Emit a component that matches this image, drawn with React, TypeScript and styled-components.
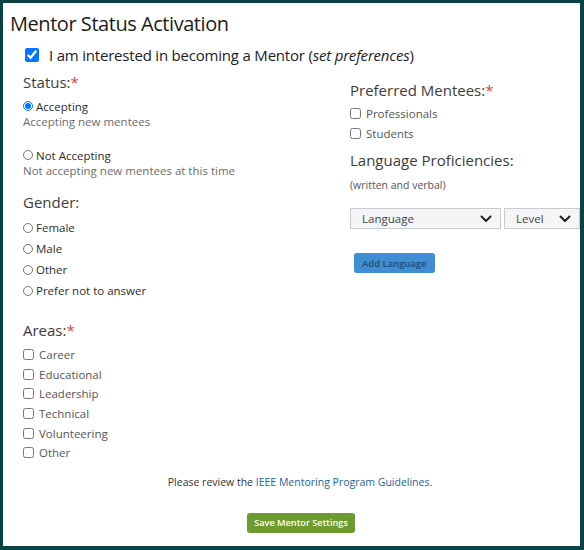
import React from 'react';
import styled, { createGlobalStyle } from 'styled-components';

const GlobalStyle = createGlobalStyle`
    html, body {
        margin: 0;
        padding: 0;
        background: #ffffff;
    }

    body {
        font-family: "Open Sans", "Noto Sans", sans-serif;
    }
`;

const Frame = styled.div`
    width: 584px;
    height: 550px;
    box-sizing: border-box;
    border-style: solid;
    border-color: #0a4346;
    border-width: 3px 4px 4px 3px;
    background: #ffffff;
    overflow: hidden;
    padding: 9px 0 0 7px;
`;

const Title = styled.h1`
    margin: 0;
    font-size: 20px;
    font-weight: 400;
    line-height: 24px;
    letter-spacing: -0.45px;
    color: #1b1b1b;
`;

const InterestRow = styled.label`
    display: flex;
    align-items: center;
    gap: 10px;
    margin: 7px 0 0 15px;
    height: 24px;
    font-size: 15px;
    letter-spacing: -0.2px;
    color: #1c1c2a;

    input {
        width: 14px;
        height: 14px;
        margin: 0;
    }
`;

const Columns = styled.div`
    display: grid;
    grid-template-columns: 327px 1fr;
    padding-left: 13px;
    margin-top: 5px;
`;

const Column = styled.div<{ $offset?: number }>`
    display: flex;
    flex-direction: column;
    padding-top: ${p => p.$offset ?? 0}px;
`;

const SectionLabel = styled.div<{ $gap?: number }>`
    font-size: 15px;
    line-height: 20px;
    color: #3d3d3d;
    margin-top: ${p => p.$gap ?? 0}px;
`;

const Required = styled.span`
    color: #e0443e;
`;

const RadioRow = styled.label<{ $gap?: number; $height?: number }>`
    display: flex;
    align-items: center;
    gap: 3px;
    height: ${p => p.$height ?? 16}px;
    margin-top: ${p => p.$gap ?? 0}px;
    font-size: 11.5px;
    color: #2d2d2d;

    input {
        width: 10px;
        height: 10px;
        margin: 0;
    }
`;

const Hint = styled.div`
    font-size: 11.5px;
    line-height: 16px;
    color: #6c6c6c;
`;

const CheckRow = styled.label<{ $gap?: number; $height?: number }>`
    display: flex;
    align-items: center;
    gap: 5px;
    height: ${p => p.$height ?? 19.6}px;
    margin-top: ${p => p.$gap ?? 0}px;
    font-size: 11.5px;
    color: #555555;

    input {
        width: 11px;
        height: 11px;
        margin: 0;
    }
`;

const Note = styled.div`
    margin-top: 7px;
    font-size: 10.5px;
    line-height: 16px;
    color: #555555;
`;

const SelectRow = styled.div`
    display: flex;
    gap: 3px;
    margin-top: 15px;
`;

const SelectBox = styled.div<{ $width: number }>`
    display: flex;
    align-items: center;
    justify-content: space-between;
    box-sizing: border-box;
    width: ${p => p.$width}px;
    flex-shrink: 0;
    height: 21px;
    padding: 0 8px 0 11px;
    border: 1px solid #c9cccf;
    background: #f4f5f6;
    font-size: 11.5px;
    color: #444444;
`;

const SmallButton = styled.button<{ $bg: string; $color: string }>`
    align-self: flex-start;
    height: 20px;
    padding: 0 8px;
    border: none;
    border-radius: 3px;
    background: ${p => p.$bg};
    color: ${p => p.$color};
    font-family: "Open Sans", "Noto Sans", sans-serif;
    font-size: 9.5px;
    font-weight: 600;
    cursor: pointer;
`;

const AddButton = styled(SmallButton)`
    margin: 24px 0 0 4px;
`;

const Footer = styled.div`
    display: flex;
    flex-direction: column;
    align-items: center;
    padding-left: 10px;
    margin-top: 11px;
`;

const Guidelines = styled.p`
    margin: 0;
    font-size: 10.5px;
    line-height: 16px;
    color: #333333;

    a {
        color: #1f6499;
        text-decoration: none;
    }
`;

const SaveButton = styled(SmallButton)`
    align-self: center;
    margin: 23px 0 0 2px;
    padding: 0 7px;
    font-size: 9.2px;
`;

function Chevron() {
    return (
        <svg width="12" height="8" viewBox="0 0 12 8">
            <path d="M1.5 1.5 L6 6 L10.5 1.5" fill="none" stroke="#222" strokeWidth="2" strokeLinecap="round" strokeLinejoin="round" />
        </svg>
    );
}

const genders = ['Female', 'Male', 'Other', 'Prefer not to answer'];
const areas = ['Career', 'Educational', 'Leadership', 'Technical', 'Volunteering', 'Other'];

export default function App() {
    return (
        <Frame>
            <GlobalStyle />
            <Title>Mentor Status Activation</Title>
            <InterestRow>
                <input type="checkbox" defaultChecked />
                <span>I am interested in becoming a Mentor (<i>set preferences</i>)</span>
            </InterestRow>
            <Columns>
                <Column>
                    <SectionLabel>Status:<Required>*</Required></SectionLabel>
                    <RadioRow $gap={6}>
                        <input type="radio" name="status" defaultChecked />
                        Accepting
                    </RadioRow>
                    <Hint>Accepting new mentees</Hint>
                    <RadioRow $gap={17}>
                        <input type="radio" name="status" />
                        Not Accepting
                    </RadioRow>
                    <Hint>Not accepting new mentees at this time</Hint>

                    <SectionLabel $gap={13}>Gender:</SectionLabel>
                    {genders.map((g, i) => (
                        <RadioRow key={g} $height={21} $gap={i === 0 ? 5 : 0}>
                            <input type="radio" name="gender" />
                            {g}
                        </RadioRow>
                    ))}

                    <SectionLabel $gap={19}>Areas:<Required>*</Required></SectionLabel>
                    {areas.map((a, i) => (
                        <CheckRow key={a} $gap={i === 0 ? 5 : 0}>
                            <input type="checkbox" />
                            {a}
                        </CheckRow>
                    ))}
                </Column>
                <Column $offset={8}>
                    <SectionLabel>Preferred Mentees:<Required>*</Required></SectionLabel>
                    <CheckRow $gap={4} $height={19.5}>
                        <input type="checkbox" />
                        Professionals
                    </CheckRow>
                    <CheckRow $height={19.5}>
                        <input type="checkbox" />
                        Students
                    </CheckRow>
                    <SectionLabel $gap={7}>Language Proficiencies:</SectionLabel>
                    <Note>(written and verbal)</Note>
                    <SelectRow>
                        <SelectBox $width={151}>
                            Language
                            <Chevron />
                        </SelectBox>
                        <SelectBox $width={76}>
                            Level
                            <Chevron />
                        </SelectBox>
                    </SelectRow>
                    <AddButton $bg="#3f8dd3" $color="#1d4c78">Add Language</AddButton>
                </Column>
            </Columns>
            <Footer>
                <Guidelines>
                    Please review the <a href="#">IEEE Mentoring Program Guidelines.</a>
                </Guidelines>
                <SaveButton $bg="#6d9b2e" $color="#ffffff">Save Mentor Settings</SaveButton>
            </Footer>
        </Frame>
    );
}
